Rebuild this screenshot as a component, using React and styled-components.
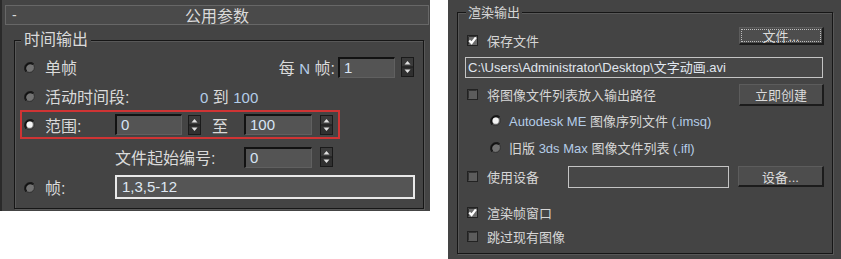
import React from 'react';
import styled, { createGlobalStyle } from 'styled-components';

// Estilos globais

const GlobalStyle = createGlobalStyle`
  html, body {
    margin: 0;
    padding: 0;
    background: #ffffff;
  }
  body {
    font-family: "Liberation Sans", "Noto Sans CJK SC", sans-serif;
  }
`;

const Page = styled.div`
  display: flex;
  align-items: flex-start;
  width: 841px;
  height: 259px;
  background: #ffffff;
`;

const LeftPanel = styled.div`
  box-sizing: border-box;
  width: 430px;
  height: 211px;
  padding-top: 5px;
  background: #444444;
  border-left: 2px solid #2a2a2a;
  color: #dadada;
  font-size: 16px;
`;

const RightPanel = styled.div`
  box-sizing: border-box;
  width: 393px;
  height: 259px;
  margin-left: 18px;
  padding-top: 12px;
  background: #444444;
  color: #d6d6d6;
  font-size: 13px;
`;

const HeaderBar = styled.div`
  box-sizing: border-box;
  display: flex;
  align-items: center;
  height: 20px;
  margin: 0 1px 0 3px;
  padding: 0 6px;
  background: #4a4a4a;
  border: 1px solid #676767;
  font-size: 16px;
`;

const HeaderDash = styled.span`
  width: 10px;
  font-size: 14px;
`;

const HeaderTitle = styled.span`
  flex: 1;
  text-align: center;
  margin-right: 10px;
`;

const Group = styled.div`
  box-sizing: border-box;
  width: ${p => p.w}px;
  height: ${p => p.h}px;
  margin-top: ${p => p.mt}px;
  margin-left: ${p => p.ml}px;
  border: 1px solid #161616;
  box-shadow: 1px 1px 0 #585858, inset 1px 1px 0 #585858;
`;

const GroupTitle = styled.div`
  width: fit-content;
  margin: ${p => p.mt}px 0 0 ${p => p.ml}px;
  padding: 0 ${p => p.px}px;
  line-height: ${p => p.lh}px;
  background: #444444;
`;

const Rows = styled.div`
  padding-top: ${p => p.pt}px;
`;

const Row = styled.div`
  display: flex;
  align-items: center;
  height: ${p => p.h}px;
  margin-top: ${p => p.mt || 0}px;
  padding-right: ${p => p.pr || 0}px;
`;

const RangeBox = styled.div`
  box-sizing: border-box;
  display: flex;
  align-items: center;
  width: 320px;
  height: 29px;
  margin-left: 5px;
  border: 2px solid #cf3434;
`;

const Label = styled.span`
  flex: none;
  margin-left: ${p => (p.ml === 'auto' ? 'auto' : `${p.ml || 0}px`)};
  width: ${p => (p.w ? `${p.w}px` : 'auto')};
  white-space: nowrap;
`;

const Latin = styled.span`
  color: ${p => p.c || '#b4cde8'};
  font-family: "Liberation Sans", sans-serif;
  font-size: ${p => p.fs || 'inherit'};
`;

const NumField = styled.div`
  box-sizing: border-box;
  flex: none;
  width: ${p => p.w}px;
  height: 21px;
  margin-left: ${p => p.ml || 0}px;
  padding-left: 4px;
  background: #545454;
  border-top: 2px solid #121212;
  border-left: 2px solid #121212;
  border-right: 1px solid #606060;
  border-bottom: 1px solid #606060;
  color: #d7e5f4;
  font-family: "Liberation Sans", sans-serif;
  font-size: 15px;
  line-height: 18px;
`;

const FrameField = styled.div`
  box-sizing: border-box;
  flex: none;
  width: 300px;
  height: 24px;
  padding-left: 5px;
  background: #555555;
  border: 2px solid #e9e9e9;
  color: #dfe8f2;
  font-family: "Liberation Sans", sans-serif;
  font-size: 15px;
  line-height: 20px;
`;

const PathField = styled.div`
  box-sizing: border-box;
  flex: none;
  width: ${p => p.w}px;
  height: ${p => p.h}px;
  margin-left: ${p => p.ml || 0}px;
  padding-left: 2px;
  background: #474747;
  border: 1px solid #c4c4c4;
  color: #e0e6ee;
  font-size: 13px;
  line-height: ${p => p.h - 2}px;
  white-space: nowrap;
  overflow: hidden;
`;

const Button = styled.div`
  box-sizing: border-box;
  flex: none;
  display: flex;
  align-items: stretch;
  width: ${p => p.w}px;
  height: ${p => p.h}px;
  margin-left: ${p => p.ml === 'auto' ? 'auto' : `${p.ml}px`};
  margin-right: ${p => p.mr}px;
  align-self: ${p => p.top ? 'flex-start' : 'center'};
  padding: 1px;
  background: #4d4d4d;
  border-top: 1px solid #5c5c5c;
  border-left: 1px solid #5c5c5c;
  border-right: 2px solid #1c1c1c;
  border-bottom: 2px solid #1c1c1c;
  color: #dcdcdc;
  font-size: 13px;
`;

const ButtonText = styled.span`
  flex: 1;
  display: flex;
  align-items: center;
  justify-content: center;
  border: 1px ${p => (p.focus ? 'dotted #bdbdbd' : 'solid transparent')};
`;

const IconBox = styled.span`
  flex: none;
  display: flex;
  margin-left: ${p => p.ml || 0}px;
`;

const Radio = ({ on, ml }) => (
  <IconBox ml={ml}>
    <svg width="11" height="11" viewBox="0 0 11 11">
      <circle cx="5.5" cy="5.5" r="5" fill="#727272" />
      <path d="M9.3 2.3 A5 5 0 0 0 2.3 9.3" fill="none" stroke="#101010" strokeWidth="2" />
      <circle cx="5.5" cy="5.5" r="4.9" fill="none" stroke="#262626" strokeWidth="0.8" />
      {on && <circle cx="5.7" cy="5.7" r="3.1" fill="#f4f4f4" />}
    </svg>
  </IconBox>
);

const Check = ({ on, ml }) => (
  <IconBox ml={ml}>
    <svg width="11" height="11" viewBox="0 0 11 11">
      <rect x="0.5" y="0.5" width="10" height="10" fill={on ? '#6c6c6c' : '#5c5c5c'} stroke="#222222" />
      <path d="M1.5 1.5 H9.5 M1.5 1.5 V9.5" stroke="#333333" strokeWidth="1" />
      {on && (
        <path d="M2.2 5.4 L4.6 8 L8.9 2.4" fill="none" stroke="#ffffff" strokeWidth="2.2" />
      )}
    </svg>
  </IconBox>
);

const Spinner = ({ ml }) => (
  <IconBox ml={ml}>
    <svg width="13" height="20" viewBox="0 0 13 20">
      <rect x="0.5" y="0.5" width="12" height="19" fill="#303030" stroke="#1a1a1a" />
      <rect x="1" y="1" width="11" height="8.5" fill="#3b3b3b" />
      <line x1="1" y1="10" x2="12" y2="10" stroke="#1c1c1c" />
      <polygon points="3.5,7.5 9.5,7.5 6.5,4" fill="#e0e0e0" />
      <polygon points="3.5,12.5 9.5,12.5 6.5,16" fill="#e0e0e0" />
    </svg>
  </IconBox>
);

class App extends React.Component {
  render() {
    return (
      <Page>
        <GlobalStyle />
        <LeftPanel>
          <HeaderBar>
            <HeaderDash>-</HeaderDash>
            <HeaderTitle>公用参数</HeaderTitle>
          </HeaderBar>

          <Group w={410} h={169} mt={15} ml={12}>
            <GroupTitle mt={-10} ml={6} px={3} lh={18}>时间输出</GroupTitle>
            <Rows pt={3}>
              <Row h={30} pr={9}>
                <Radio ml={9} />
                <Label ml={10}>单帧</Label>
                <Label ml="auto">每 <Latin fs="15px">N</Latin> 帧:</Label>
                <NumField w={57} ml={3}>1</NumField>
                <Spinner ml={6} />
              </Row>

              <Row h={28}>
                <Radio ml={9} />
                <Label ml={10} w={155}>活动时间段:</Label>
                <Label>
                  <Latin fs="15px">0</Latin> 到 <Latin fs="15px">100</Latin>
                </Label>
              </Row>

              <RangeBox>
                <Radio ml={2} on />
                <Label ml={10} w={70}>范围:</Label>
                <NumField w={67}>0</NumField>
                <Spinner ml={6} />
                <Label ml={11} w={32}>至</Label>
                <NumField w={68}>100</NumField>
                <Spinner ml={8} />
              </RangeBox>

              <Row h={36}>
                <Label ml={100} w={129}>文件起始编号:</Label>
                <NumField w={68}>0</NumField>
                <Spinner ml={8} />
              </Row>

              <Row h={24}>
                <Radio ml={9} />
                <Label ml={10} w={70}>帧:</Label>
                <FrameField>1,3,5-12</FrameField>
              </Row>
            </Rows>
          </Group>
        </LeftPanel>

        <RightPanel>
          <Group w={376} h={242} mt={0} ml={9}>
            <GroupTitle mt={-8} ml={8} px={2} lh={16}>渲染输出</GroupTitle>
            <Rows pt={6}>
              <Row h={26}>
                <Check ml={9} on />
                <Label ml={9}>保存文件</Label>
                <Button w={85} h={18} ml="auto" mr={8} top>
                  <ButtonText focus>文件...</ButtonText>
                </Button>
              </Row>

              <Row h={21} mt={4}>
                <PathField w={358} h={21} ml={7}>
                  {'C:\\Users\\Administrator\\Desktop\\文字动画.avi'}
                </PathField>
              </Row>

              <Row h={23} mt={5}>
                <Check ml={9} />
                <Label ml={9}>将图像文件列表放入输出路径</Label>
                <Button w={85} h={22} ml="auto" mr={8}>
                  <ButtonText>立即创建</ButtonText>
                </Button>
              </Row>

              <Row h={28}>
                <Radio ml={32} on />
                <Label ml={8}>
                  <Latin>Autodesk ME</Latin> 图像序列文件 <Latin>(.imsq)</Latin>
                </Label>
              </Row>

              <Row h={26}>
                <Radio ml={32} />
                <Label ml={8}>
                  旧版 <Latin>3ds Max</Latin> 图像文件列表 <Latin>(.ifl)</Latin>
                </Label>
              </Row>

              <Row h={23} mt={5}>
                <Check ml={9} />
                <Label ml={9} w={81}>使用设备</Label>
                <PathField w={161} h={22} />
                <Button w={86} h={21} ml={9} mr={7}>
                  <ButtonText>设备...</ButtonText>
                </Button>
              </Row>

              <Row h={24} mt={12}>
                <Check ml={9} on />
                <Label ml={9}>渲染帧窗口</Label>
              </Row>

              <Row h={24}>
                <Check ml={9} />
                <Label ml={9}>跳过现有图像</Label>
              </Row>
            </Rows>
          </Group>
        </RightPanel>
      </Page>
    );
  }
}

export default App;
